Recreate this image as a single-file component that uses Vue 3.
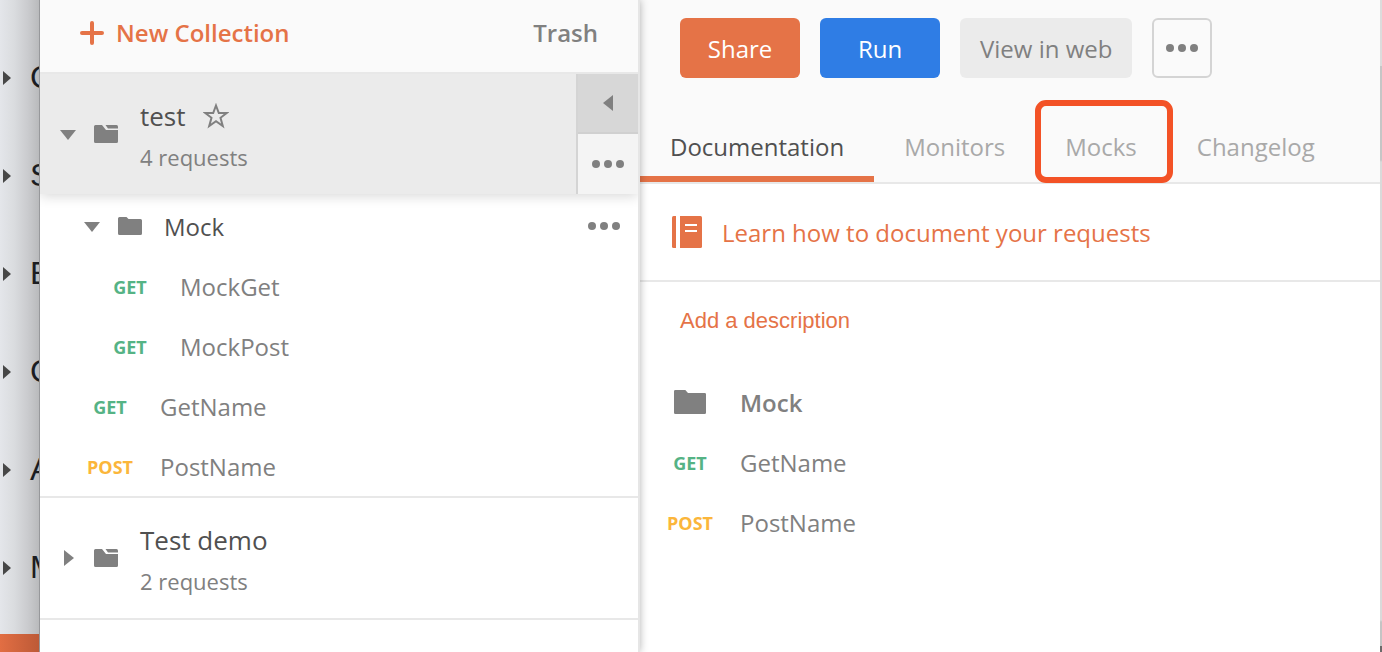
<script setup>
const backdrop = ['C', 'S', 'E', 'C', 'A', 'M']
const nested = [
  { method: 'GET', name: 'MockGet' },
  { method: 'GET', name: 'MockPost' },
]
const requests = [
  { method: 'GET', name: 'GetName' },
  { method: 'POST', name: 'PostName' },
]
const tabs = ['Documentation', 'Monitors', 'Mocks', 'Changelog']
</script>

<template>
  <div class="app">
    <div class="backdrop">
      <ul class="backdrop-list">
        <li v-for="(letter, i) in backdrop" :key="i">
          <svg width="12" height="16" viewBox="0 0 12 16"><path d="M3 2 L11 9 L3 16 Z" fill="#474747" /></svg>
          <span>{{ letter }}</span>
        </li>
      </ul>
      <div class="backdrop-bar"></div>
    </div>

    <aside class="sidebar">
      <header class="side-head">
        <button class="new-btn" type="button">
          <svg width="24" height="24" viewBox="0 0 24 24"><path d="M12 2V22M2 12H22" stroke="#e57347" stroke-width="4" stroke-linecap="round" /></svg>
          New Collection
        </button>
        <button class="trash" type="button">Trash</button>
      </header>

      <section class="collection active">
        <button class="toggle" type="button" aria-label="Collapse test">
          <svg width="16" height="16" viewBox="0 0 16 16"><path d="M0 4H16L8 14Z" fill="#808080" /></svg>
        </button>
        <svg class="folder" width="24" height="18" viewBox="0 0 24 18">
          <path d="M1.500 0H8L12 5H24V16.500Q24 18 22.500 18H1.500Q0 18 0 16.500V1.500Q0 0 1.500 0Z" fill="#808080" />
          <path d="M11.500 0H22.500Q24 0 24 1.500V3.500H14Z" fill="#808080" />
        </svg>
        <div class="collection-text">
          <div class="title">
            test
            <button class="star" type="button" aria-label="Favorite">
              <svg width="26" height="26" viewBox="0 0 26 26"><path d="M13 2.500L15.800 10H23.700L17.500 14.800L19.800 23L13 18.200L6.200 23L8.500 14.800L2.300 10H10.200Z" fill="none" stroke="#808080" stroke-width="2" /></svg>
            </button>
          </div>
          <div class="sub">4 requests</div>
        </div>
        <div class="side-actions">
          <button class="collapse" type="button" aria-label="Hide details">
            <svg width="10" height="16" viewBox="0 0 10 16"><path d="M10 0V16L0 8Z" fill="#808080" /></svg>
          </button>
          <button class="more" type="button" aria-label="More">
            <svg width="32" height="8" viewBox="0 0 32 8" fill="#808080"><circle cx="4" cy="4" r="4" /><circle cx="16" cy="4" r="4" /><circle cx="28" cy="4" r="4" /></svg>
          </button>
        </div>
      </section>

      <div class="tree">
        <div class="folder-row">
          <button class="toggle" type="button" aria-label="Collapse Mock">
            <svg width="16" height="16" viewBox="0 0 16 16"><path d="M0 4H16L8 14Z" fill="#808080" /></svg>
          </button>
          <svg class="folder" width="24" height="18" viewBox="0 0 24 18"><path d="M1.500 0H8.500L10.500 2H22.500Q24 2 24 3.500V16.500Q24 18 22.500 18H1.500Q0 18 0 16.500V1.500Q0 0 1.500 0Z" fill="#808080" /></svg>
          <span class="folder-name">Mock</span>
          <button class="more" type="button" aria-label="More">
            <svg width="32" height="8" viewBox="0 0 32 8" fill="#808080"><circle cx="4" cy="4" r="4" /><circle cx="16" cy="4" r="4" /><circle cx="28" cy="4" r="4" /></svg>
          </button>
        </div>
        <ul class="requests deep">
          <li v-for="r in nested" :key="r.name"><b :class="r.method.toLowerCase()">{{ r.method }}</b><span class="name">{{ r.name }}</span></li>
        </ul>
        <ul class="requests">
          <li v-for="r in requests" :key="r.name"><b :class="r.method.toLowerCase()">{{ r.method }}</b><span class="name">{{ r.name }}</span></li>
        </ul>
      </div>

      <section class="collection">
        <button class="toggle" type="button" aria-label="Expand Test demo">
          <svg width="16" height="16" viewBox="0 0 16 16"><path d="M4 0V16L14 8Z" fill="#808080" /></svg>
        </button>
        <svg class="folder" width="24" height="18" viewBox="0 0 24 18">
          <path d="M1.500 0H8L12 5H24V16.500Q24 18 22.500 18H1.500Q0 18 0 16.500V1.500Q0 0 1.500 0Z" fill="#808080" />
          <path d="M11.500 0H22.500Q24 0 24 1.500V3.500H14Z" fill="#808080" />
        </svg>
        <div class="collection-text">
          <div class="title">Test demo</div>
          <div class="sub">2 requests</div>
        </div>
      </section>
    </aside>

    <main class="details">
      <header class="detail-head">
        <div class="actions">
          <button class="btn share" type="button">Share</button>
          <button class="btn run" type="button">Run</button>
          <button class="btn web" type="button">View in web</button>
          <button class="btn dots" type="button" aria-label="More">
            <svg width="32" height="8" viewBox="0 0 32 8" fill="#808080"><circle cx="4" cy="4" r="4" /><circle cx="16" cy="4" r="4" /><circle cx="28" cy="4" r="4" /></svg>
          </button>
        </div>
        <nav class="tabs">
          <button
            v-for="(tab, i) in tabs"
            :key="tab"
            type="button"
            :class="{ selected: i === 0, marked: tab === 'Mocks' }"
          >{{ tab }}</button>
        </nav>
      </header>
      <a class="learn" href="#">
        <svg width="30" height="32" viewBox="0 0 30 32">
          <path d="M1.500 0H4V32H1.500Q0 32 0 30.500V1.500Q0 0 1.500 0Z" fill="#e57347" />
          <path d="M8 0H28.500Q30 0 30 1.500V30.500Q30 32 28.500 32H8Z" fill="#e57347" />
          <path d="M13 9H25M13 15H25" stroke="#fff" stroke-width="2" />
        </svg>
        <span class="learn-text">Learn how to document your requests</span>
      </a>
      <button class="describe" type="button">Add a description</button>
      <ul class="requests contents">
        <li>
          <span class="icon-cell"><svg width="32" height="24" viewBox="0 0 24 18"><path d="M1 0H8.500L10.500 2.200H23Q24 2.200 24 3.200V17Q24 18 23 18H1Q0 18 0 17V1Q0 0 1 0Z" fill="#808080" /></svg></span>
          <strong>Mock</strong>
        </li>
        <li v-for="r in requests" :key="r.name"><b :class="r.method.toLowerCase()">{{ r.method }}</b><span class="name">{{ r.name }}</span></li>
      </ul>
    </main>
    <div class="edge"></div>
  </div>
</template>

<style>
html,
body {
  margin: 0;
  overflow: hidden;
}
</style>

<style scoped>
.app {
  display: flex;
  height: 100vh;
  overflow: hidden;
  background: #fff;
  color: #808080;
  font: 24px/32px "Open Sans", "Noto Sans", sans-serif;
}
button {
  margin: 0;
  padding: 0;
  border: 0;
  background: none;
  color: inherit;
  font: inherit;
  cursor: pointer;
}
svg {
  display: block;
  flex: none;
}
ul {
  margin: 0;
  padding: 0;
  list-style: none;
}

.backdrop {
  box-sizing: border-box;
  display: flex;
  flex-direction: column;
  justify-content: space-between;
  width: 40px;
  flex: none;
  overflow: hidden;
  border-right: 1px solid #97989b;
  background: linear-gradient(to right, #e4e6ea 0, #dadcdf 14px, #cacbce 28px, #b9babc 100%);
}
.backdrop-list {
  padding-top: 28px;
}
.backdrop-list li {
  display: flex;
  align-items: center;
  gap: 18px;
  height: 98px;
  color: #1b1d22;
  font: 32px/40px "Liberation Sans", Arial, sans-serif;
}
.backdrop-bar {
  height: 18px;
  flex: none;
  background: linear-gradient(to right, #e26e43, #bd5a37);
}

.sidebar {
  position: relative;
  z-index: 1;
  box-sizing: border-box;
  width: 600px;
  flex: none;
  border-right: 2px solid #e6e6e6;
  background: #fff;
  box-shadow: 0 0 8px rgba(0, 0, 0, 0.3);
  clip-path: inset(0 -12px 0 0);
}
.side-head {
  display: flex;
  align-items: center;
  justify-content: space-between;
  box-sizing: border-box;
  height: 74px;
  padding: 0 40px 6px;
  border-bottom: 2px solid #e8e8e8;
  background: #fafafa;
  font-weight: 600;
}
.new-btn {
  display: flex;
  align-items: center;
  gap: 12px;
  color: #e57347;
}
.collection {
  display: flex;
  align-items: center;
  height: 120px;
  padding-left: 20px;
  border-bottom: 2px solid #e8e8e8;
}
.collection.active {
  border-bottom: 0;
  background: #ebebeb;
  box-shadow: 0 2px 12px rgba(0, 0, 0, 0.16);
  clip-path: inset(0 0 -16px 0);
}
.toggle {
  flex: none;
}
.folder {
  margin-left: 18px;
}
.collection-text {
  flex: 1;
  margin-left: 22px;
  padding-top: 6px;
}
.title {
  display: flex;
  align-items: center;
  gap: 17px;
  color: #505050;
  font-size: 26px;
  line-height: 40px;
}
.sub {
  font-size: 22px;
  line-height: 42px;
}
.side-actions {
  display: flex;
  flex-direction: column;
  align-self: stretch;
  width: 60px;
  border-left: 2px solid #d4d4d4;
}
.side-actions button {
  display: flex;
  box-sizing: border-box;
  height: 60px;
  align-items: center;
  justify-content: center;
}
.side-actions .collapse {
  border-bottom: 2px solid #d0d0d0;
  background: #d7d7d7;
}
.side-actions .more {
  background: #f4f4f4;
}

.tree {
  padding-top: 2px;
  border-bottom: 2px solid #e8e8e8;
}
.folder-row {
  display: flex;
  align-items: center;
  height: 60px;
  padding: 0 18px 0 44px;
}
.folder-name {
  flex: 1;
  margin-left: 22px;
  padding-top: 2px;
  color: #505050;
}
.requests {
  padding-left: 40px;
}
.requests.deep {
  padding-left: 60px;
}
.requests li {
  display: flex;
  align-items: center;
  gap: 20px;
  height: 60px;
}
.requests b,
.requests strong,
.name,
.learn-text {
  padding-top: 2px;
}
.requests b {
  width: 60px;
  font-size: 18px;
  font-weight: 700;
  text-align: center;
}
.requests strong {
  font-weight: 600;
}
.get {
  color: #55b385;
}
.post {
  color: #fbb63b;
}
.icon-cell {
  display: flex;
  justify-content: center;
  width: 60px;
}

.details {
  flex: 1;
  min-width: 0;
  background: #fff;
}
.detail-head {
  border-bottom: 2px solid #e8e8e8;
  background: #fafafa;
}
.actions {
  display: flex;
  gap: 20px;
  padding: 18px 40px 34px;
}
.btn {
  display: flex;
  align-items: center;
  justify-content: center;
  box-sizing: border-box;
  height: 60px;
  padding-top: 2px;
  border-radius: 6px;
}
.share,
.run {
  width: 120px;
  color: #fff;
}
.share {
  background: #e57347;
}
.run {
  background: #2f7de5;
}
.web {
  padding: 2px 20px 0;
  background: #ebebeb;
}
.dots {
  width: 60px;
  padding: 0;
  border: 2px solid #d4d4d4;
}
.tabs {
  display: flex;
}
.tabs button {
  position: relative;
  height: 70px;
  padding: 6px 30px 0;
  border-bottom: 6px solid transparent;
  color: #a9a9a9;
}
.tabs .selected {
  border-color: #e57347;
  color: #505050;
}
.tabs .marked::after {
  position: absolute;
  inset: -12px -6px -7px 0;
  border: 6px solid #f35226;
  border-radius: 11px;
  content: "";
}
.learn {
  display: flex;
  align-items: center;
  gap: 20px;
  height: 96px;
  padding-left: 32px;
  border-bottom: 2px solid #e8e8e8;
  color: #e57347;
  text-decoration: none;
}
.describe {
  display: block;
  margin: 22px 40px 34px;
  color: #e57347;
  font: 22px/34px "Liberation Sans", Arial, sans-serif;
}
.contents {
  padding-left: 20px;
}
.edge {
  width: 2px;
  flex: none;
  background: linear-gradient(#dcdcdc 66px, #c6c6c6 66px, #c6c6c6 160px, #dadada 162px, #dadada calc(100% - 32px), #c4c4c4 calc(100% - 30px), #c4c4c4 calc(100% - 6px), #6a6a6a calc(100% - 6px));
}
</style>
